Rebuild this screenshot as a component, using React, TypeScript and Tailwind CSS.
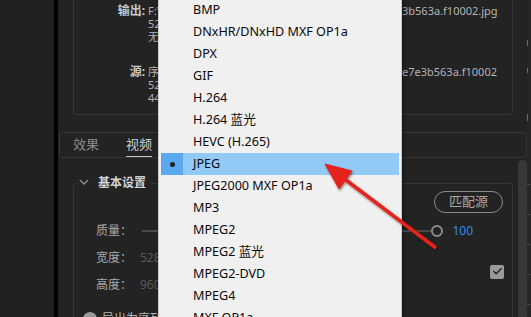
import { Check } from 'lucide-react'

const formats = [
  'BMP',
  'DNxHR/DNxHD MXF OP1a',
  'DPX',
  'GIF',
  'H.264',
  'H.264 蓝光',
  'HEVC (H.265)',
  'JPEG',
  'JPEG2000 MXF OP1a',
  'MP3',
  'MPEG2',
  'MPEG2 蓝光',
  'MPEG2-DVD',
  'MPEG4',
  'MXF OP1a',
]

const selected = 'JPEG'

function SummaryLine({ label, hidden, visible }: { label?: string; hidden: string; visible?: string }) {
  return (
    <div className="flex h-[13px] items-center leading-[13px]">
      <span className="w-[71px] shrink-0 text-right text-[12px] font-bold text-[#c8c8c8]">{label}</span>
      <span className="ml-[3px] flex whitespace-nowrap text-[11px] text-[#b4b4b4]">
        <span className="inline-block w-[254px] overflow-hidden">{hidden}</span>
        {visible && <span>{visible}</span>}
      </span>
    </div>
  )
}

function FormatMenu() {
  return (
    <div className="absolute top-[-4px] left-[158px] w-[244px] border border-[#cccccc] bg-[#f0f0f0] p-[2px] shadow-[2px_2px_4px_rgba(0,0,0,0.35)]">
      {formats.map((name) => {
        const active = name === selected
        return (
          <div key={name} className={`flex h-[22px] items-center ${active ? 'bg-[#91c9f7]' : ''}`}>
            <div className={`flex h-full w-[22px] items-center justify-center ${active ? 'bg-[#5aa9f0]' : ''}`}>
              {active && <div className="h-[5px] w-[5px] rounded-full bg-[#222]" />}
            </div>
            <span className="pl-[10px] text-[12.6px] text-[#0a0a0a]">{name}</span>
          </div>
        )
      })}
    </div>
  )
}

function RedArrow() {
  return (
    <svg className="pointer-events-none absolute inset-0" width="531" height="317" viewBox="0 0 531 317">
      <defs>
        <filter id="shadow" x="-20%" y="-20%" width="140%" height="140%">
          <feDropShadow dx="1" dy="1.5" stdDeviation="1" floodColor="#000" floodOpacity="0.45" />
        </filter>
      </defs>
      <g filter="url(#shadow)" fill="#e5241b" stroke="#e5241b">
        <line x1="436" y1="248" x2="342" y2="177" strokeWidth="3.5" />
        <polygon points="325,164 352,171 339,189" strokeWidth="1" strokeLinejoin="round" />
      </g>
    </svg>
  )
}

export default function App() {
  return (
    <div className="relative flex h-[317px] w-[531px] overflow-hidden bg-[#232323] font-['Noto_Sans','Noto_Sans_CJK_SC',sans-serif]">
      <div className="w-[54px] shrink-0 bg-[#212121]" />
      <div className="w-[4px] shrink-0 bg-black" />

      {/* Export settings panel */}
      <div className="flex w-[469px] shrink-0 flex-col">
        {/* Summary */}
        <div className="ml-[15px] h-[115px] w-[440px] shrink-0 rounded-b-[3px] border-x border-b border-[#353535] pt-[4px]">
          <SummaryLine label="输出:" hidden="F:\导出\序列 01_a5c9d2b1e7e" visible="3b563a.f10002.jpg" />
          <SummaryLine hidden="528x960 (1.0), 25 fps, 逐行, 00:00:00:01" />
          <SummaryLine hidden="无音频" />
          <div className="h-[22px]" />
          <SummaryLine label="源:" hidden="序列, 序列 01_a5c9d2b1e7e3b563a.f1000" visible="e7e3b563a.f10002" />
          <SummaryLine hidden="528x960 (1.0), 25 fps, 逐行, 00:00:00:01" />
          <SummaryLine hidden="44100 Hz, 立体声" />
        </div>

        {/* Tabs */}
        <div className="mt-[17px] ml-[1px] flex h-[26px] w-[468px] shrink-0 items-end rounded-[3px] border border-[#353535] pl-[13px]">
          <div className="flex h-full items-center text-[13px] text-[#8a8a8a]">效果</div>
          <div className="ml-[27px] flex h-full flex-col items-center justify-center">
            <span className="mt-[2px] text-[13px] text-[#cfcfcf]">视频</span>
            <div className="mt-[1px] h-[3px] w-full rounded-full bg-[#c8c8c8]" />
          </div>
        </div>

        {/* Video tab content */}
        <div className="flex min-h-0 flex-1">
          <div className="w-[460px] shrink-0">
            <fieldset className="mt-[17px] ml-[15px] w-[440px] rounded-[3px] border border-[#353535] pb-[20px]">
              <legend className="ml-[5px] flex h-[16px] items-center">
                <svg width="10" height="6" viewBox="0 0 10 6" className="mt-[-3px]">
                  <path d="M1 1l4 4 4-4" stroke="#8c8c8c" strokeWidth="1.4" fill="none" />
                </svg>
                <span className="ml-[9px] pr-[5px] text-[12px] font-bold text-[#d2d2d2]">基本设置</span>
              </legend>

              <div className="flex justify-end pr-[9px]">
                <button className="flex h-[22px] w-[69px] items-center justify-center rounded-full border-[1.5px] border-[#8a8a8a] text-[13px] text-[#a8a8a8]">
                  匹配源
                </button>
              </div>

              <div className="mt-[8px] flex h-[20px] items-center pl-[22px] pr-[39px]">
                <span className="w-[46px] shrink-0 text-[12px] text-[#a8a8a8]">质量：</span>
                <div className="h-[2px] flex-1 bg-[#4a4a4a]" />
                <div className="h-[12px] w-[12px] shrink-0 rounded-full border-2 border-[#8c8c8c]" />
                <span className="ml-[9px] text-[12px] text-[#2d8ceb]">100</span>
              </div>

              <div className="mt-[7px] grid grid-cols-[1fr_auto] grid-rows-[20px_20px] gap-y-[7px] pr-[8px] pl-[22px]">
                <div className="flex items-center">
                  <span className="w-[44px] shrink-0 text-[12px] text-[#a8a8a8]">宽度：</span>
                  <span className="text-[12px] text-[#5a5a5a]">528</span>
                </div>
                <div className="row-span-2 flex items-center">
                  <div className="flex h-[14px] w-[14px] items-center justify-center rounded-[2px] bg-[#9a9a9a]">
                    <Check size={11} strokeWidth={3.5} color="#2a2a2a" />
                  </div>
                </div>
                <div className="flex items-center">
                  <span className="w-[44px] shrink-0 text-[12px] text-[#a8a8a8]">高度：</span>
                  <span className="text-[12px] text-[#5a5a5a]">960</span>
                </div>
              </div>

              <div className="mt-[14px] flex h-[20px] items-center pl-[9px]">
                <div className="h-[14px] w-[14px] rounded-full bg-[#9a9a9a]" />
                <span className="ml-[5px] text-[12px] text-[#b4b4b4]">导出为序列</span>
              </div>
            </fieldset>
          </div>
          <div className="mt-[2px] w-[9px] shrink-0 rounded-t-full bg-[#383838]" />
        </div>
      </div>

      {/* Right edge strip */}
      <div className="flex w-[4px] shrink-0 flex-col bg-[#262626]">
        <div className="mt-[40px] h-[6px] w-[1px] bg-[#6a6a6a]" />
        <div className="mt-[22px] h-[5px] w-[1px] bg-[#6a6a6a]" />
        <div className="mt-[41px] h-[7px] w-[1px] bg-[#6a6a6a]" />
        <div className="mt-[63px] h-[1px] w-[3px] bg-[#4a4a4a]" />
        <div className="mt-[29px] h-[1px] w-[3px] bg-[#4a4a4a]" />
        <div className="mt-[29px] h-[1px] w-[3px] bg-[#4a4a4a]" />
        <div className="mt-[29px] h-[1px] w-[3px] bg-[#4a4a4a]" />
        <div className="mt-[29px] h-[1px] w-[3px] bg-[#4a4a4a]" />
      </div>

      <FormatMenu />
      <RedArrow />
    </div>
  )
}
